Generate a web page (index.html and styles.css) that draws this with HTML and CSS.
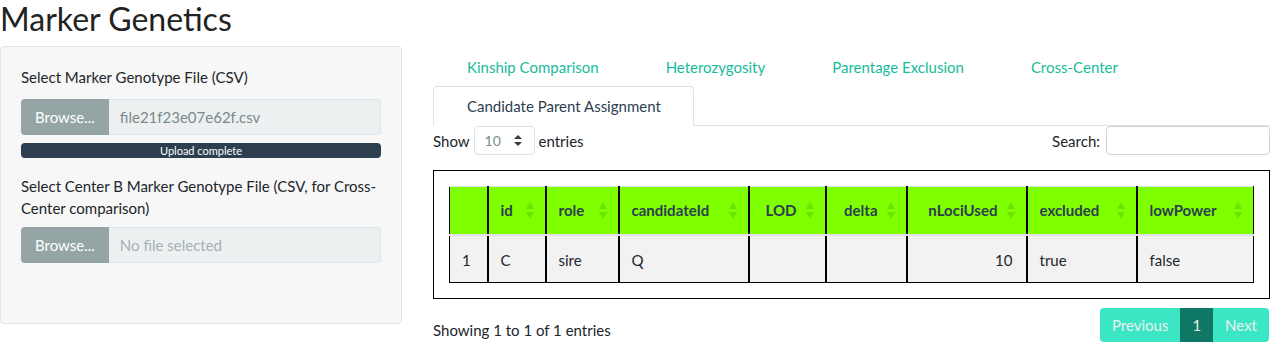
FILE: index.html
```html
<!DOCTYPE html>
<html lang="en">
<head>
    <meta charset="UTF-8">
    <meta name="viewport" content="width=device-width, initial-scale=1.0">
    <title>Marker Genetics</title>
    <link rel="stylesheet" href="styles.css">
</head>
<body>
    <h2 class="title">Marker Genetics</h2>

    <div class="layout">
        <!-- Sidebar with file inputs -->
        <div class="sidebar">
            <div class="form-group">
                <label class="control-label">Select Marker Genotype File (CSV)</label>
                <div class="input-group">
                    <span class="btn-browse">Browse...</span>
                    <span class="file-name">file21f23e07e62f.csv</span>
                </div>
                <div class="progress">Upload complete</div>
            </div>
            <div class="form-group">
                <label class="control-label second">Select Center B Marker Genotype File (CSV, for Cross-Center comparison)</label>
                <div class="input-group">
                    <span class="btn-browse">Browse...</span>
                    <span class="file-name empty">No file selected</span>
                </div>
            </div>
        </div>

        <!-- Main panel -->
        <div class="main">
            <ul class="nav-tabs">
                <li><a href="#">Kinship Comparison</a></li>
                <li><a href="#">Heterozygosity</a></li>
                <li><a href="#">Parentage Exclusion</a></li>
                <li><a href="#">Cross-Center</a></li>
                <li class="active"><a href="#">Candidate Parent Assignment</a></li>
            </ul>

            <div class="dt-controls">
                <div class="dt-length">
                    Show
                    <span class="dt-select">10
                        <svg width="8" height="11" viewBox="0 0 8 11"><polygon points="4,0 8,4 0,4" fill="#343a40"/><polygon points="0,7 8,7 4,11" fill="#343a40"/></svg>
                    </span>
                    entries
                </div>
                <div class="dt-search">
                    Search:
                    <span class="dt-input"></span>
                </div>
            </div>

            <div class="dt-wrapper">
                <table class="dt-table">
                    <colgroup>
                        <col style="width:38px">
                        <col style="width:58px">
                        <col style="width:73px">
                        <col style="width:130px">
                        <col style="width:77px">
                        <col style="width:81px">
                        <col style="width:120px">
                        <col style="width:110px">
                        <col style="width:117px">
                    </colgroup>
                    <thead>
                        <tr id="headRow">
                            <th class="rowname"></th>
                        </tr>
                    </thead>
                    <tbody>
                        <tr>
                            <td>1</td>
                            <td>C</td>
                            <td>sire</td>
                            <td>Q</td>
                            <td class="num"></td>
                            <td class="num"></td>
                            <td class="num">10</td>
                            <td>true</td>
                            <td>false</td>
                        </tr>
                    </tbody>
                </table>
            </div>

            <div class="dt-footer">
                <div class="dt-info">Showing 1 to 1 of 1 entries</div>
                <div class="pagination">
                    <span class="page disabled first">Previous</span>
                    <span class="page current">1</span>
                    <span class="page disabled last">Next</span>
                </div>
            </div>
        </div>
    </div>

    <script>
        // Build sortable header cells
        var columns = [
            { name: 'id', num: false },
            { name: 'role', num: false },
            { name: 'candidateId', num: false },
            { name: 'LOD', num: true },
            { name: 'delta', num: true },
            { name: 'nLociUsed', num: true },
            { name: 'excluded', num: false },
            { name: 'lowPower', num: false }
        ];

        var sortIcon = '<svg class="sort-icon" width="8" height="17" viewBox="0 0 8 17">' +
            '<polygon points="4,0 8,7 0,7"/><polygon points="0,10 8,10 4,17"/></svg>';

        var headRow = document.getElementById('headRow');
        columns.forEach(function(col) {
            var th = document.createElement('th');
            th.innerHTML = '<div class="th-inner' + (col.num ? ' num' : '') + '"><span>' +
                col.name + '</span>' + sortIcon + '</div>';
            headRow.appendChild(th);
        });
    </script>
</body>
</html>
```

FILE: styles.css
```css
body {
    margin: 0;
    font-family: Lato, "Open Sans", sans-serif;
    font-size: 15px;
    line-height: 22px;
    color: #212529;
    background-color: white;
}

.title {
    font-size: 32px;
    font-weight: 400;
    line-height: 38px;
    margin: 0 0 8px 0;
    color: #222;
}

.layout {
    display: flex;
    align-items: flex-start;
    gap: 31px;
}

/* Sidebar */
.sidebar {
    width: 402px;
    height: 278px;
    box-sizing: border-box;
    padding: 19px 20px;
    background-color: #f7f7f7;
    border: 1px solid #e3e3e3;
    border-radius: 4px;
}

.control-label {
    display: block;
    margin-bottom: 10px;
    color: #212529;
    line-height: 22.5px;
}

.control-label.second {
    margin-bottom: 7px;
}

.input-group {
    display: flex;
    height: 36px;
}

.btn-browse {
    display: flex;
    align-items: center;
    padding: 0 14px;
    background-color: #95a5a6;
    color: white;
    border-radius: 4px 0 0 4px;
}

.file-name {
    flex: 1;
    display: flex;
    align-items: center;
    padding: 0 11px;
    background-color: #ecf0f1;
    border: 1px solid #dce4ec;
    border-left: none;
    border-radius: 0 4px 4px 0;
    color: #7b8a8b;
}

.file-name.empty {
    color: #a5b1b2;
}

.progress {
    margin-top: 8px;
    height: 15px;
    line-height: 15px;
    border-radius: 4px;
    background-color: #2c3e50;
    color: white;
    font-size: 11px;
    text-align: center;
}

.form-group + .form-group {
    margin-top: 17px;
}

/* Main panel */
.main {
    flex: 1;
    margin-top: 1px;
}

.nav-tabs {
    display: flex;
    flex-wrap: wrap;
    list-style: none;
    margin: 0;
    padding: 0;
    border-bottom: 1px solid #dee2e6;
}

.nav-tabs li {
    margin-bottom: -1px;
}

.nav-tabs a {
    display: block;
    padding: 9px 32px 9px 33px;
    line-height: 20px;
    border: 1px solid transparent;
    border-radius: 4px 4px 0 0;
    color: #18bc9c;
    text-decoration: none;
}

.nav-tabs li.active a {
    color: #2c3e50;
    background-color: white;
    border-color: #dee2e6 #dee2e6 transparent;
}

.dt-controls {
    display: flex;
    justify-content: space-between;
    align-items: center;
    height: 29px;
}

.dt-length,
.dt-search {
    display: flex;
    align-items: center;
    gap: 4px;
}

.dt-search {
    gap: 6px;
}

.dt-select {
    display: flex;
    align-items: center;
    justify-content: space-between;
    box-sizing: border-box;
    width: 61px;
    height: 29px;
    padding: 0 12px 0 10px;
    border: 1px solid #dee2e6;
    border-radius: 4px;
    font-size: 14px;
    color: #7b8a8b;
}

.dt-input {
    display: block;
    box-sizing: border-box;
    width: 164px;
    height: 29px;
    border: 1px solid #ced4da;
    border-radius: 4px;
}

.dt-wrapper {
    margin-top: 15px;
    padding: 15px;
    border: 1px solid black;
}

.dt-table {
    width: 100%;
    table-layout: fixed;
    border-collapse: collapse;
}

.dt-table th {
    background-color: #7fff00;
    padding: 12px 11px 13px 12px;
    text-align: left;
    font-weight: 700;
    color: #2c3e50;
    border-top: 1px solid #dee2e6;
    border-bottom: 2px solid #dee2e6;
    border-right: 2px solid black;
}

.dt-table th:first-child,
.dt-table td:first-child {
    border-left: 1px solid black;
}

.dt-table th:last-child,
.dt-table td:last-child {
    border-right: 1px solid black;
}

.th-inner {
    display: flex;
    align-items: center;
    justify-content: space-between;
}

.th-inner.num {
    justify-content: flex-end;
    gap: 9px;
}

.sort-icon {
    fill: rgba(0, 0, 0, 0.12);
    flex-shrink: 0;
}

.dt-table td {
    background-color: #f2f2f2;
    padding: 13px 13px 10px 12px;
    line-height: 23px;
    color: #212529;
    border-right: 2px solid black;
    border-bottom: 1px solid black;
}

.dt-table td.num {
    text-align: right;
}

.dt-footer {
    display: flex;
    justify-content: space-between;
    align-items: flex-start;
    margin-top: 9px;
}

.dt-info {
    padding-top: 11px;
}

.pagination {
    display: flex;
    margin-right: 1px;
}

.page {
    display: block;
    padding: 6px 12px;
    line-height: 22px;
}

.page.disabled {
    background-color: #3be6c4;
    color: #ecf0f1;
}

.page.current {
    background-color: #0f7864;
    color: #ecf0f1;
}

.page.first {
    border-radius: 4px 0 0 4px;
}

.page.last {
    border-radius: 0 4px 4px 0;
}
```
